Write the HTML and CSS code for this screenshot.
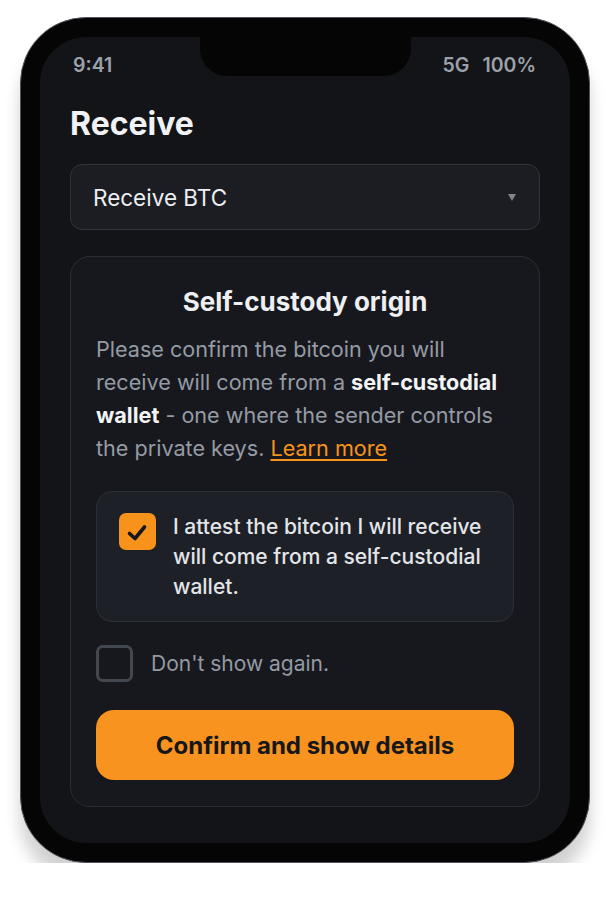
FILE: index.html
```html
<!DOCTYPE html>
<html lang="en">
<head>
    <meta charset="UTF-8">
    <meta name="viewport" content="width=device-width, initial-scale=1.0">
    <title>Receive</title>
    <link rel="stylesheet" href="styles.css">
</head>
<body>

    <div class="phone">
        <div class="screen">
            <!-- Notch sits over the top of the screen -->
            <div class="notch"></div>

            <div class="status-bar">
                <span>9:41</span>
                <span class="status-right">
                    <span>5G</span>
                    <span>100%</span>
                </span>
            </div>

            <main class="content">
                <h1 class="page-title">Receive</h1>

                <div class="select">
                    <span>Receive BTC</span>
                    <svg class="select-arrow" width="8" height="7" viewBox="0 0 8 7">
                        <path d="M0 0 H8 L4 7 Z" fill="#7d838c"/>
                    </svg>
                </div>

                <section class="card">
                    <h2 class="card-title">Self-custody origin</h2>
                    <p class="card-text">
                        Please confirm the bitcoin you will receive will come from a
                        <b>self-custodial wallet</b> - one where the sender controls the private keys.
                        <a href="#" class="link">Learn more</a>
                    </p>

                    <label class="attest">
                        <span class="checkbox checked">
                            <svg width="37" height="37" viewBox="0 0 37 37">
                                <path d="M10.5 20.5 L16 25.5 L25.5 14" fill="none" stroke="#16171b" stroke-width="3.6" stroke-linecap="round" stroke-linejoin="round"/>
                            </svg>
                        </span>
                        <span class="attest-text">I attest the bitcoin I will receive will come from a self-custodial wallet.</span>
                    </label>

                    <label class="dont-show">
                        <span class="checkbox"></span>
                        <span>Don't show again.</span>
                    </label>

                    <button class="btn-confirm">Confirm and show details</button>
                </section>
            </main>
        </div>
    </div>

</body>
</html>
```

FILE: styles.css
```css
/* General Styling */
* {
    box-sizing: border-box;
    margin: 0;
    padding: 0;
}

body {
    font-family: Inter, "Noto Sans", Arial, sans-serif;
    background: #fff;
}

/* Phone frame */
.phone {
    width: 570px;
    height: 846px;
    margin: 17px 0 0 20px;
    padding: 19px;
    background: #050505;
    border: 1px solid #50555d;
    border-radius: 66px;
    box-shadow: 0px 20px 16px rgba(0, 0, 0, 0.18);
}

.screen {
    position: relative;
    height: 100%;
    background: #131418;
    border-radius: 46px;
    overflow: hidden;
}

.notch {
    position: absolute;
    top: 0;
    left: 160px;
    width: 211px;
    height: 39px;
    background: #050505;
    border-radius: 0 0 27px 27px;
}

/* Status bar */
.status-bar {
    display: flex;
    justify-content: space-between;
    padding: 17px 34px 0 33px;
    font-size: 19.5px;
    line-height: 22px;
    font-weight: 600;
    color: #9ca1aa;
}

.status-right {
    display: flex;
    gap: 13px;
}

/* Page content */
.content {
    padding: 0 30px;
}

.page-title {
    margin-top: 29px;
    font-size: 32px;
    line-height: 38px;
    font-weight: 700;
    color: #f1f2f4;
}

.select {
    display: flex;
    align-items: center;
    justify-content: space-between;
    height: 66px;
    margin-top: 21px;
    padding: 0 23px 0 22px;
    background: #1b1d23;
    border: 1px solid #30343c;
    border-radius: 12px;
    font-size: 22.5px;
    color: #eceef1;
}

/* Card */
.card {
    margin-top: 26px;
    padding: 29px 25px 26px;
    background: #17181d;
    border: 1px solid #2b2e35;
    border-radius: 20px;
}

.card-title {
    font-size: 26px;
    line-height: 32px;
    font-weight: 700;
    text-align: center;
    color: #eeeff2;
}

.card-text {
    margin-top: 15px;
    font-size: 21.6px;
    line-height: 33px;
    color: #959ba4;
}

.card-text b {
    color: #f3f4f6;
}

.link {
    color: #f7931a;
    text-decoration: underline;
    text-underline-offset: 3px;
}

/* Checkboxes */
.checkbox {
    flex: none;
    display: flex;
    align-items: center;
    justify-content: center;
    width: 37px;
    height: 37px;
    border: 3px solid #434850;
    border-radius: 7px;
}

.checkbox.checked {
    background: #f7931a;
    border: none;
}

.attest {
    display: flex;
    align-items: flex-start;
    gap: 17px;
    margin-top: 26px;
    padding: 20px 18px 19px 22px;
    background: #1d2027;
    border: 1px solid #2b2f37;
    border-radius: 16px;
}

.attest .checkbox {
    margin-top: 1px;
}

.attest-text {
    font-size: 21px;
    line-height: 30px;
    font-weight: 500;
    color: #e3e5e9;
}

.dont-show {
    display: flex;
    align-items: center;
    gap: 18px;
    margin-top: 23px;
    font-size: 21px;
    color: #949aa3;
}

/* Button */
.btn-confirm {
    display: block;
    width: 100%;
    height: 70px;
    margin-top: 28px;
    background: #f7931e;
    border: none;
    border-radius: 18px;
    font-family: inherit;
    font-size: 24px;
    font-weight: 700;
    color: #16171a;
    cursor: pointer;
}
```
